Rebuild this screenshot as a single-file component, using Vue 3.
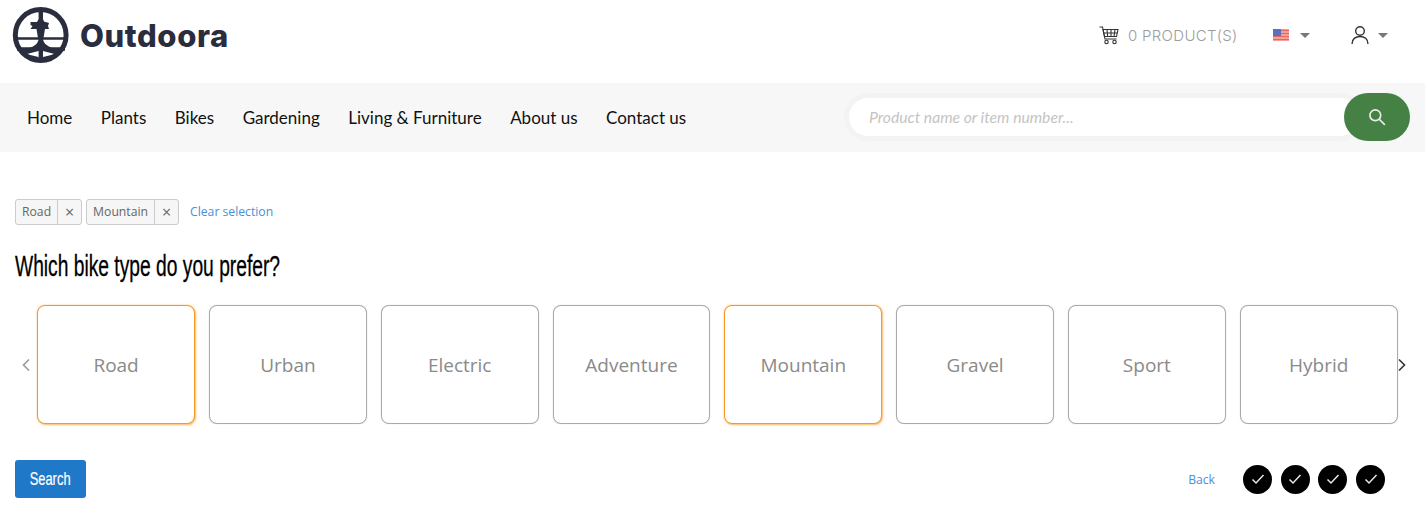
<script setup>
const links = ['Home', 'Plants', 'Bikes', 'Gardening', 'Living & Furniture', 'About us', 'Contact us']
const cards = [
  { name: 'Road', on: true }, { name: 'Urban' }, { name: 'Electric' }, { name: 'Adventure' },
  { name: 'Mountain', on: true }, { name: 'Gravel' }, { name: 'Sport' }, { name: 'Hybrid' }
]
const tags = ['Road', 'Mountain']
const steps = [1, 2, 3, 4]
</script>

<template>
  <div class="page">
    <header class="top">
      <div class="brand">
        <svg class="logo" viewBox="0 0 58 58" width="58" height="58" fill="#2a2d3e" stroke="none">
          <circle cx="28.7" cy="29" r="25.4" fill="none" stroke="#2a2d3e" stroke-width="5" />
          <path d="M3 31.3H55V33.8H3ZM5 41.3H53V44.7H5Z" />
          <path d="M26.6 3V13L25 16H18.5V19L20.5 20L18.5 23H24.5L26 32H31.5L33 23H37L36 20L37 17L32 15.5L31 13V3Z" />
          <path d="M26.6 33C26 38 22 40.5 17 42H41C36 40.5 31.6 38 31 33Z" />
          <path d="M26.6 44V56H31V44Z" />
          <path d="M10 44H26.6V45L14 48.3L10 48ZM47.5 44H31V45L43.5 48.3L47.5 48ZM14 48L26.6 51V56L18 55ZM43.5 48L31 51V56L39.5 55Z" />
        </svg>
        <span class="brand-name">Outdoora</span>
      </div>
      <div class="tools">
        <div class="cart">
          <svg viewBox="0 0 20 20" width="20" height="20" fill="none" stroke="#333" stroke-width="1.1">
            <path d="M0.5 2H3.5L6 14H17.5" />
            <path d="M4 4.5H19L17.5 11.5H5.5Z" />
            <path d="M4.5 8H18.2M8 4.5L8.7 11.5M12 4.5V11.5M16 4.5L15 11.5" />
            <circle cx="7.5" cy="17" r="1.7" />
            <circle cx="15.5" cy="17" r="1.7" />
          </svg>
          <span>0 PRODUCT(S)</span>
        </div>
        <div class="flag-menu">
          <svg class="flag" viewBox="0 0 16 12" width="16" height="12">
            <rect width="16" height="12" fill="#f3b4ae" />
            <path d="M0 1.5H16M0 4.5H16M0 7.5H16M0 10.5H16" stroke="#e2685f" stroke-width="1.3" />
            <rect width="8" height="7" fill="#5b6fc0" />
          </svg>
          <i class="caret"></i>
        </div>
        <div class="user-menu">
          <svg viewBox="0 0 18 20" width="18" height="20" fill="none" stroke="#333" stroke-width="1.4">
            <circle cx="9" cy="6" r="4.3" />
            <path d="M1 19C1 14 4.5 11.5 9 11.5S17 14 17 19" />
          </svg>
          <i class="caret"></i>
        </div>
      </div>
    </header>

    <nav class="bar">
      <ul class="links">
        <li v-for="link in links" :key="link">{{ link }}</li>
      </ul>
      <div class="search">
        <div class="field">Product name or item number...</div>
        <button class="go" aria-label="Search">
          <svg viewBox="0 0 16 16" width="18" height="18" fill="none" stroke="#e6efe6" stroke-width="1.5">
            <circle cx="6.5" cy="6.5" r="4.8" />
            <path d="M10 10L15 15" />
          </svg>
        </button>
      </div>
    </nav>

    <main class="content">
      <div class="tags">
        <div v-for="tag in tags" :key="tag" class="tag">
          <span class="tag-label">{{ tag }}</span>
          <span class="tag-x">×</span>
        </div>
        <a class="clear">Clear selection</a>
      </div>
      <h1 class="title"><span>Which bike type do you prefer?</span></h1>
      <div class="carousel">
        <svg class="arrow" viewBox="0 0 10 14" width="10" height="14" fill="none" stroke="#999" stroke-width="1.6">
          <path d="M8 1.5L2.5 7L8 12.5" />
        </svg>
        <div class="cards">
          <div v-for="card in cards" :key="card.name" class="card" :class="{ on: card.on }">{{ card.name }}</div>
        </div>
        <svg class="arrow" viewBox="0 0 10 14" width="10" height="14" fill="none" stroke="#333" stroke-width="1.6">
          <path d="M2 1.5L7.5 7L2 12.5" />
        </svg>
      </div>
      <div class="foot">
        <button class="primary"><span>Search</span></button>
        <div class="progress">
          <a class="back">Back</a>
          <div class="dots">
            <span v-for="s in steps" :key="s" class="dot">
              <svg viewBox="0 0 14 12" width="14" height="12" fill="none" stroke="#e8e8e8" stroke-width="1.5">
                <path d="M1.5 6.5L5 10L12.5 2" />
              </svg>
            </span>
          </div>
        </div>
      </div>
    </main>
  </div>
</template>

<style>
html, body { margin: 0; background: #fff; }
</style>

<style scoped>
.page { width: 1425px; height: 526px; overflow: hidden; font-family: "Open Sans", sans-serif; }
.top { height: 83px; box-sizing: border-box; padding: 6px 37px 0 12px; display: flex; justify-content: space-between; align-items: flex-start; }
.brand { display: flex; align-items: center; gap: 10px; }
.logo { display: block; }
.brand-name { font-family: Inter, sans-serif; font-weight: 800; font-size: 31px; color: #2a2d3e; letter-spacing: 0.6px; }
.tools { display: flex; align-items: center; height: 58px; }
.cart { display: flex; align-items: center; gap: 9px; font-family: Inter, sans-serif; font-size: 15px; font-weight: 300; letter-spacing: 0.3px; color: #9c9c9c; width: 174px; }
.flag-menu { display: flex; align-items: center; gap: 11px; width: 78px; }
.flag { display: block; }
.user-menu { display: flex; align-items: center; gap: 9px; }
.caret { display: block; width: 0; height: 0; border-left: 5px solid transparent; border-right: 5px solid transparent; border-top: 5px solid #777; }
.bar { height: 69px; box-sizing: border-box; background: #f7f7f7; display: flex; justify-content: space-between; align-items: center; padding: 0 15px 1px 27px; }
.links { list-style: none; margin: 0; padding: 0; display: flex; gap: 28.5px; font-family: Lato, sans-serif; font-size: 17px; color: #111; }
.search { position: relative; display: flex; align-items: center; width: 561px; height: 48px; }
.field { box-sizing: border-box; width: 510px; height: 38px; line-height: 38px; background: #fff; border-radius: 19px; padding-left: 20px; box-shadow: 0 0 0 5px #f3f3f3; font-family: Lato, sans-serif; font-style: italic; font-size: 15.7px; color: #c4c4c4; }
.go { position: absolute; right: 0; top: 0; width: 66px; height: 48px; border: 0; border-radius: 24px; background: #458045; display: flex; align-items: center; justify-content: center; padding: 0; }
.content { padding: 47px 15px 0; }
.tags { display: flex; align-items: center; gap: 4px; height: 26px; }
.tag { display: flex; height: 26px; box-sizing: border-box; border: 1px solid #ccc; border-radius: 3px; background: #f6f6f6; font-size: 12.2px; color: #666; line-height: 24px; }
.tag-label { padding: 0 6px; border-right: 1px solid #ccc; }
.tag-x { width: 23px; text-align: center; font-size: 16px; }
.clear { margin-left: 7px; font-size: 12.2px; line-height: 26px; height: 26px; color: #4a90d9; }
.title { margin: 25px 0 0; height: 32px; font-weight: 400; font-family: "Liberation Sans", sans-serif; font-size: 29px; line-height: 32px; color: #000; }
.title span { display: inline-block; transform: scaleX(0.663); transform-origin: left center; white-space: nowrap; -webkit-text-stroke: 0.3px #000; }
.carousel { margin-top: 23px; display: flex; align-items: center; margin-left: 6px; }
.arrow { display: block; flex: none; }
.cards { display: flex; gap: 14px; margin: 0 0 0 6.2px; }
.carousel .arrow:last-child { margin-left: -1px; }
.card { width: 157.8px; height: 119px; box-sizing: border-box; border: 1px solid #aaa; border-radius: 8px; display: flex; align-items: center; justify-content: center; font-size: 19px; color: #8a8a8a; background: #fff; box-shadow: 0 0 1px rgba(0, 0, 0, 0.25); }
.card.on { border-color: #f7982a; box-shadow: 0 0 2px rgba(248, 154, 44, 0.6), 1px 1px 2px rgba(248, 154, 44, 0.6); }
.foot { margin-top: 36px; display: flex; justify-content: space-between; align-items: center; padding-right: 25px; }
.primary { width: 71px; height: 38px; border: 0; border-radius: 3px; background: #1f78c8; color: #fff; padding: 0; font-family: "Liberation Sans", sans-serif; font-size: 19px; display: flex; align-items: center; justify-content: center; }
.primary span { display: inline-block; transform: scaleX(0.68); -webkit-text-stroke: 0.2px #fff; }
.progress { display: flex; align-items: center; gap: 28px; }
.back { font-size: 12.2px; color: #4a90d9; }
.dots { display: flex; gap: 8.67px; }
.dot { width: 29px; height: 29px; border-radius: 50%; background: #000; display: flex; align-items: center; justify-content: center; }
</style>
